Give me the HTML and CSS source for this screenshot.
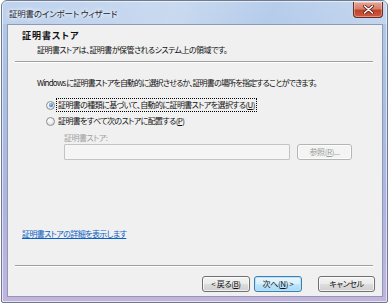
FILE: index.html
```html
<!DOCTYPE html>
<html lang="ja">
<head>
    <meta charset="UTF-8">
    <title>証明書のインポート ウィザード</title>
    <link rel="stylesheet" href="styles.css">
</head>
<body>

    <div class="window">
        <div class="titlebar">
            <span class="title">証明書のインポート ウィザード</span>
            <button class="close-btn" aria-label="閉じる">
                <svg width="11" height="9" viewBox="0 0 11 9">
                    <path d="M1.5 1 L9.5 8 M9.5 1 L1.5 8" stroke="#5a1a12" stroke-width="3" stroke-linecap="round"/>
                    <path d="M1.5 1 L9.5 8 M9.5 1 L1.5 8" stroke="#fff" stroke-width="1.6" stroke-linecap="round"/>
                </svg>
            </button>
        </div>

        <div class="client">
            <div class="wizard-header">
                <h1>証明書ストア</h1>
                <p>証明書ストアは、証明書が保管されるシステム上の領域です。</p>
            </div>
            <div class="separator"></div>

            <div class="page">
                <p class="intro">Windows に証明書ストアを自動的に選択させるか、証明書の場所を指定することができます。</p>

                <label class="radio checked">
                    <span class="radio-dot"></span>
                    <span class="radio-text focused">証明書の種類に基づいて、自動的に証明書ストアを選択する(<u>U</u>)</span>
                </label>
                <label class="radio">
                    <span class="radio-dot"></span>
                    <span class="radio-text">証明書をすべて次のストアに配置する(<u>P</u>)</span>
                </label>

                <div class="store">
                    <span class="store-label">証明書ストア:</span>
                    <div class="store-row">
                        <div class="store-input"></div>
                        <button class="btn disabled">参照(<u>R</u>)...</button>
                    </div>
                </div>

                <a href="#" class="more-link">証明書ストアの詳細を表示します</a>
            </div>

            <div class="separator"></div>
            <div class="buttons">
                <button class="btn back">&lt; 戻る(<u>B</u>)</button>
                <button class="btn next default">次へ(<u>N</u>) &gt;</button>
                <button class="btn cancel">キャンセル</button>
            </div>
        </div>
    </div>

</body>
</html>
```

FILE: styles.css
```css
* { box-sizing: border-box; margin: 0; padding: 0; }
body {
    background: #fff; width: 391px; height: 306px; overflow: hidden;
    font-family: "Noto Sans CJK JP", "Noto Sans", sans-serif; font-size: 8px;
    font-feature-settings: "palt"; color: #111;
}
.window {
    width: 387px; height: 303px; margin-left: 1px;
    display: flex; flex-direction: column;
    border: 1px solid #6d7a92; border-radius: 6px 6px 2px 2px;
    background: linear-gradient(180deg, #b3cbea 0%, #a9c0e3 30%, #b0b3e0 70%, #c3b3df 100%);
    box-shadow: inset 0 0 0 1px rgba(255, 255, 255, 0.6);
    padding: 0 4px 5px 5px;
}
.titlebar {
    height: 23px; flex: none; display: flex; align-items: flex-start; justify-content: space-between;
    background: linear-gradient(100deg, rgba(255,255,255,0.15) 0%, rgba(255,255,255,0.3) 45%, rgba(255,255,255,0.05) 70%, rgba(255,255,255,0.25) 100%);
    margin: 0 -4px 0 -5px; padding: 0 4px 0 7px;
}
.title {
    line-height: 12px; margin-top: 6px; font-size: 8.5px; letter-spacing: -0.2px; color: #1c2633;
    text-shadow: 0 0 4px #fff, 0 0 6px #fff;
}
.close-btn {
    width: 30px; height: 16px; margin-top: 1px; border: 1px solid #6b2a22; border-top: none;
    border-radius: 0 0 4px 4px; display: flex; align-items: center; justify-content: center;
    background: linear-gradient(180deg, #e7a596 0%, #d6806c 45%, #c2412b 55%, #cc5a3e 100%);
    box-shadow: inset 0 0 0 1px rgba(255, 255, 255, 0.35);
}
.client {
    flex: 1; background: #f0f0f0; border: 1px solid #8c9bb3;
    display: flex; flex-direction: column;
}
.wizard-header { padding: 5px 0 0 14px; }
.wizard-header h1 { font-size: 9px; font-weight: 700; line-height: 12px; letter-spacing: 1px; }
.wizard-header p { line-height: 12px; margin: 2px 0 0 15px; letter-spacing: -0.55px; }
.separator {
    height: 2px; margin: 5px 9px 0 7px;
    border-top: 1px solid #a0a0a0; border-bottom: 1px solid #fff;
}
.page { flex: 1; padding: 14px 0 0 29px; display: flex; flex-direction: column; align-items: flex-start; }
.intro { line-height: 12px; letter-spacing: -0.8px; margin-bottom: 10px; }
.radio { display: flex; align-items: center; gap: 2px; line-height: 12px; margin: 0 0 4px 9px; letter-spacing: -0.6px; }
.radio-dot {
    width: 9px; height: 9px; border-radius: 50%; border: 1px solid #8f8f8f; flex: none;
    background: radial-gradient(circle at 40% 35%, #fff 0%, #e2e2e2 70%, #cfcfcf 100%);
    position: relative;
}
.radio.checked .radio-dot::after {
    content: ""; position: absolute; left: 1.5px; top: 1.5px; width: 4px; height: 4px; border-radius: 50%;
    background: radial-gradient(circle at 40% 35%, #9fd3ff 0%, #2d73c8 70%, #1b4f99 100%);
}
.radio-text { padding: 0 1px; }
.radio-text.focused { outline: 1px dotted #000; outline-offset: 0; }
.store { margin: 1px 0 0 27px; display: flex; flex-direction: column; }
.store-label { line-height: 12px; color: #a0a0a0; letter-spacing: -0.5px; }
.store-row { display: flex; gap: 7px; margin-top: 0; }
.store-input { width: 226px; height: 16px; background: #f5f5f5; border: 1px solid #c3c3c3; border-radius: 1px; }
.btn {
    font-family: inherit; font-size: 8px; font-feature-settings: "palt"; letter-spacing: -0.4px;
    height: 16px; line-height: 12px; color: #111;
    border: 1px solid #707070; border-radius: 3px;
    background: linear-gradient(180deg, #f3f3f3 0%, #ebebeb 48%, #dddddd 52%, #cfcfcf 100%);
    box-shadow: inset 0 0 0 1px rgba(255, 255, 255, 0.7);
}
.btn u { text-decoration: underline; }
.btn.disabled { width: 55px; color: #9a9a9a; border-color: #b5b5b5; background: #f4f4f4; }
.more-link {
    margin: 68px 0 0 -15px; line-height: 12px; color: #0a5fc4; letter-spacing: -0.6px;
    text-decoration: underline;
}
.buttons { display: flex; justify-content: flex-end; gap: 4px; padding: 9px 7px 4px 0; }
.btn.back, .btn.next { width: 48px; }
.btn.cancel { width: 57px; margin-left: 12px; }
.btn.default {
    border-color: #3c7fb1;
    background: linear-gradient(180deg, #eaf6fd 0%, #d9f0fc 48%, #bee6fd 52%, #a7d9f5 100%);
    box-shadow: inset 0 0 0 1px #b7e2fa;
}
```
